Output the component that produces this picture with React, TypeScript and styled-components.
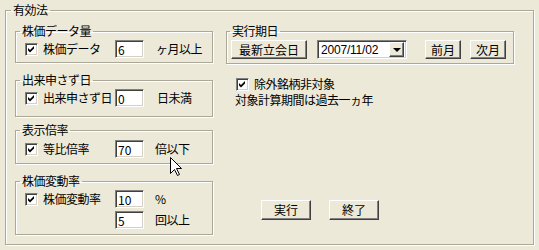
import styled, { createGlobalStyle } from "styled-components"

const Global = createGlobalStyle`
  html, body {
    margin: 0;
    background: #ece9d8;
  }
  body {
    font-family: "Noto Sans CJK JP", "Noto Sans", sans-serif;
    font-size: 12px;
    line-height: 14px;
    letter-spacing: -0.5px;
    color: #000;
  }
`

const Page = styled.div`
  position: relative;
  width: 539px;
  height: 250px;
  background: #ece9d8;
  overflow: hidden;
`

const Frame = styled.fieldset<{ $pt: number; $pb: number; $pl: number }>`
  margin: 0;
  min-width: 0;
  box-sizing: border-box;
  padding: ${p => p.$pt}px 0 ${p => p.$pb}px ${p => p.$pl}px;
  border: 1px solid #aca899;
  box-shadow: inset 1px 1px 0 #fff, 1px 1px 0 #fff;
`

const Outer = styled(Frame)`
  margin: 3px 0 0 5px;
  width: 529px;
`

const Legend = styled.legend<{ $ml: number }>`
  padding: 0 2px;
  margin-left: ${p => p.$ml}px;
  line-height: 14px;
  font-size: 12px;
`

const Columns = styled.div`
  display: flex;
  gap: 13px;
`

const LeftCol = styled.div`
  width: 198px;
  display: flex;
  flex-direction: column;
`

const Group = styled(Frame)<{ $mt?: number }>`
  width: 100%;
  margin-top: ${p => p.$mt ?? 0}px;
`

const Grid = styled.div`
  display: grid;
  grid-template-columns: 90px 29px auto;
  row-gap: 3px;
  align-items: center;
`

const CheckLabel = styled.label`
  display: flex;
  align-items: center;
  gap: 5px;
  height: 18px;
  white-space: nowrap;
`

const Box = styled.span`
  position: relative;
  width: 13px;
  height: 13px;
  box-sizing: border-box;
  background: #fff;
  border-top: 1px solid #808080;
  border-left: 1px solid #808080;
  border-bottom: 1px solid #fff;
  border-right: 1px solid #fff;
  box-shadow: inset 1px 1px 0 #404040, inset -1px -1px 0 #d4d0c8;
  flex: none;

  svg {
    position: absolute;
    left: 0;
    top: 0;
  }
`

const NumInput = styled.input`
  grid-column: 2;
  width: 29px;
  height: 18px;
  box-sizing: border-box;
  margin: 0;
  padding: 0 0 0 2px;
  font: inherit;
  letter-spacing: 0;
  line-height: 14px;
  background: #fff;
  border-top: 1px solid #808080;
  border-left: 1px solid #808080;
  border-bottom: 1px solid #fff;
  border-right: 1px solid #fff;
  box-shadow: inset 1px 1px 0 #404040, inset -1px -1px 0 #d4d0c8;
  outline: none;
`

const Suffix = styled.span<{ $gap: number }>`
  margin-left: ${p => p.$gap}px;
  white-space: nowrap;
`

const RightCol = styled.div`
  width: 288px;
  display: flex;
  flex-direction: column;
`

const ToolRow = styled.div`
  display: flex;
  align-items: center;
`

const Btn = styled.button<{ $w: number; $h?: number; $ml?: number }>`
  width: ${p => p.$w}px;
  height: ${p => p.$h ?? 19}px;
  margin: 0 0 0 ${p => p.$ml ?? 0}px;
  padding: 0;
  box-sizing: border-box;
  font: inherit;
  line-height: 14px;
  color: #000;
  background: #ece9d8;
  border-top: 1px solid #fff;
  border-left: 1px solid #fff;
  border-bottom: 1px solid #404040;
  border-right: 1px solid #404040;
  box-shadow: inset -1px -1px 0 #808080;
  flex: none;
`

const Combo = styled.div`
  margin-left: 10px;
  width: 90px;
  height: 19px;
  box-sizing: border-box;
  display: flex;
  align-items: center;
  background: #fff;
  border-top: 1px solid #808080;
  border-left: 1px solid #808080;
  border-bottom: 1px solid #fff;
  border-right: 1px solid #fff;
  box-shadow: inset 1px 1px 0 #404040, inset -1px -1px 0 #d4d0c8;
  padding: 2px;
`

const ComboText = styled.span`
  flex: 1;
  padding-left: 1px;
  font-family: "Liberation Sans", "Noto Sans CJK JP", sans-serif;
  letter-spacing: -0.2px;
`

const DropBtn = styled.span`
  width: 15px;
  height: 15px;
  box-sizing: border-box;
  display: flex;
  align-items: center;
  justify-content: center;
  background: #ece9d8;
  border-top: 1px solid #fff;
  border-left: 1px solid #fff;
  border-bottom: 1px solid #404040;
  border-right: 1px solid #404040;
  box-shadow: inset -1px -1px 0 #808080;

  &::after {
    content: "";
    border-left: 4px solid transparent;
    border-right: 4px solid transparent;
    border-top: 4px solid #000;
    margin-top: 1px;
  }
`

const OptRow = styled(CheckLabel)`
  margin: 12px 0 0 10px;
  height: 16px;
`

const Note = styled.div`
  margin: 1px 0 0 9px;
  white-space: nowrap;
`

const ActionRow = styled.div`
  display: flex;
  gap: 18px;
  margin: 93px 0 0 35px;
`

const Cursor = styled.svg`
  position: absolute;
  left: 170px;
  top: 157px;
`

function Check({ label }: { label: string }) {
  return (
    <>
      <Box>
        <svg width="11" height="11" viewBox="0 0 11 11">
          <polygon points="2,4 4,6 8,2 8,4.5 4,8.5 2,6.5" fill="#000" />
        </svg>
      </Box>
      <span>{label}</span>
    </>
  )
}

export default function App() {
  return (
    <Page>
      <Global />
      <Outer $pt={7} $pb={9} $pl={9}>
        <Legend $ml={-4}>有効法</Legend>
        <Columns>
          <LeftCol>
            <Group $pt={2} $pb={4} $pl={9}>
              <Legend $ml={-5}>株価データ量</Legend>
              <Grid>
                <CheckLabel><Check label="株価データ" /></CheckLabel>
                <NumInput readOnly value="6" />
                <Suffix $gap={12}>ヶ月以上</Suffix>
              </Grid>
            </Group>

            <Group $mt={10} $pt={2} $pb={9} $pl={9}>
              <Legend $ml={-5}>出来申さず日</Legend>
              <Grid>
                <CheckLabel><Check label="出来申さず日" /></CheckLabel>
                <NumInput readOnly value="0" />
                <Suffix $gap={13}>日未満</Suffix>
              </Grid>
            </Group>

            <Group $mt={6} $pt={3} $pb={5} $pl={9}>
              <Legend $ml={-5}>表示倍率</Legend>
              <Grid>
                <CheckLabel><Check label="等比倍率" /></CheckLabel>
                <NumInput readOnly value="70" />
                <Suffix $gap={11}>倍以下</Suffix>
              </Grid>
            </Group>

            <Group $mt={10} $pt={2} $pb={5} $pl={9}>
              <Legend $ml={-5}>株価変動率</Legend>
              <Grid>
                <CheckLabel><Check label="株価変動率" /></CheckLabel>
                <NumInput readOnly value="10" />
                <Suffix $gap={11}>%</Suffix>
                <NumInput readOnly value="5" />
                <Suffix $gap={11}>回以上</Suffix>
              </Grid>
            </Group>
          </LeftCol>

          <RightCol>
            <Group $pt={2} $pb={4} $pl={4}>
              <Legend $ml={-1}>実行期日</Legend>
              <ToolRow>
                <Btn $w={76}>最新立会日</Btn>
                <Combo>
                  <ComboText>2007/11/02</ComboText>
                  <DropBtn />
                </Combo>
                <Btn $w={36} $ml={18}>前月</Btn>
                <Btn $w={36} $ml={9}>次月</Btn>
              </ToolRow>
            </Group>

            <OptRow><Check label="除外銘柄非対象" /></OptRow>
            <Note>対象計算期間は過去一ヵ年</Note>

            <ActionRow>
              <Btn $w={50} $h={20}>実行</Btn>
              <Btn $w={50} $h={20}>終了</Btn>
            </ActionRow>
          </RightCol>
        </Columns>
      </Outer>

      <Cursor width="13" height="20" viewBox="0 0 13 20">
        <path
          d="M0.5 0.5 L0.5 16.5 L4.5 12.5 L7.5 18.5 L9.5 17.5 L6.5 11.5 L11.5 11.5 Z"
          fill="#fff"
          stroke="#000"
          strokeWidth="1"
          strokeLinejoin="miter"
        />
      </Cursor>
    </Page>
  )
}
